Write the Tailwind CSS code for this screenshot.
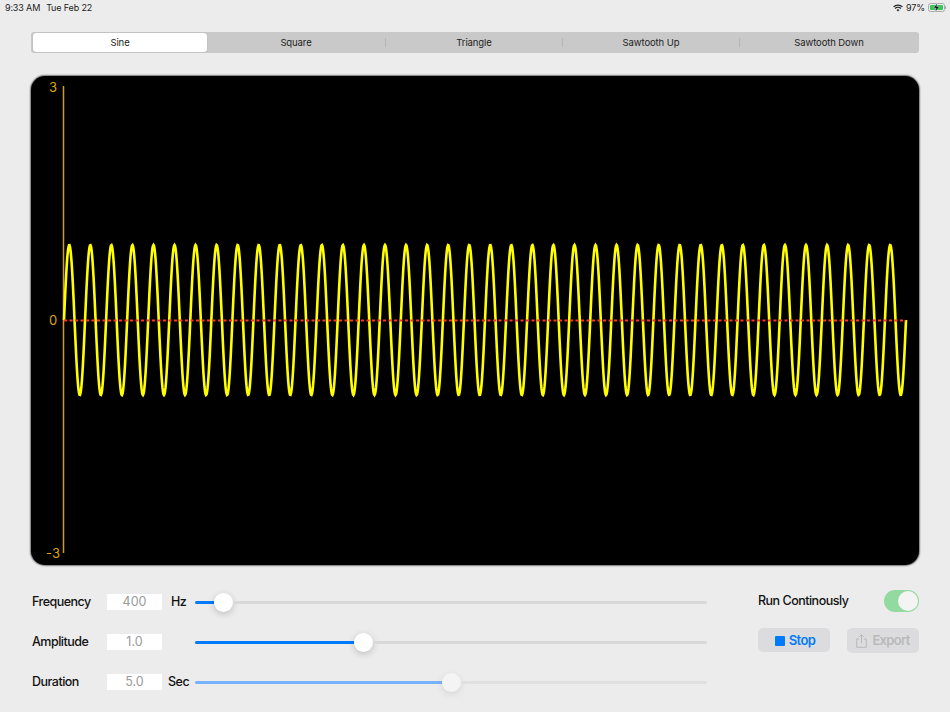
<!DOCTYPE html>
<html lang="en">
<head>
    <meta charset="UTF-8">
    <title>Waveform Generator</title>
    <script src="https://cdn.jsdelivr.net/npm/@tailwindcss/browser@4"></script>
</head>
<body class="w-[950px] h-[712px] overflow-hidden bg-[#ececec] text-[#111] font-['Inter','Liberation_Sans',sans-serif]">

    <!-- Status bar -->
    <div class="h-[14px] pt-[1px] flex items-center justify-between pl-[5px] pr-[4px] text-[9px] tracking-[-0.15px] text-[#222]">
        <div class="flex gap-[6px]">
            <span>9:33 AM</span>
            <span>Tue Feb 22</span>
        </div>
        <div class="flex items-center gap-[3px]">
            <svg width="10" height="8" viewBox="0 0 11 8" fill="none" stroke="#222">
                <path d="M0.6 2.8 A7 7 0 0 1 10.4 2.8" stroke-width="1.4"/>
                <path d="M2.3 4.5 A4.6 4.6 0 0 1 8.7 4.5" stroke-width="1.4"/>
                <path d="M5.5 7.8 L3.9 6.1 A2.3 2.3 0 0 1 7.1 6.1 Z" fill="#222" stroke="none"/>
            </svg>
            <span>97%</span>
            <div class="flex items-center">
                <div class="w-[17px] h-[9px] rounded-[2.5px] border border-[#aaa] p-[1px] flex">
                    <div class="flex-1 rounded-[1px] bg-[#34c759] flex items-center justify-center">
                        <svg width="7" height="9" viewBox="0 0 6 8" class="shrink-0"><path d="M3.6 0 L0.4 4.6 H2.6 L2 8 L5.6 3.2 H3.2 Z" fill="#111" stroke="#ececec" stroke-width="0.4"/></svg>
                    </div>
                </div>
                <div class="w-[1px] h-[3px] bg-[#aaa]"></div>
            </div>
        </div>
    </div>

    <!-- Waveform picker -->
    <div class="mt-[18px] ml-[31px] w-[888px] h-[21px] bg-[#c9c9c9] rounded-[3px] p-[1px] flex text-[9.5px] tracking-[-0.1px] text-[#222]">
        <div class="w-[174px] pt-[1px] ml-[1px] bg-white rounded-[3px] shadow-[0_0_1px_rgba(0,0,0,0.3)] flex items-center justify-center">Sine</div>
        <div class="w-[179px] flex items-center justify-center border-r border-[#b5b5b5] my-[5px] pt-[1px]">Square</div>
        <div class="w-[177px] flex items-center justify-center border-r border-[#b5b5b5] my-[5px] pt-[1px]">Triangle</div>
        <div class="w-[177px] flex items-center justify-center border-r border-[#b5b5b5] my-[5px] pt-[1px]">Sawtooth Up</div>
        <div class="flex-1 flex items-center justify-center pt-[1px]">Sawtooth Down</div>
    </div>

    <!-- Chart -->
    <div class="relative mt-[23px] ml-[31px] w-[888px] h-[489px] bg-black rounded-[14px] shadow-[0_0_1.5px_1px_rgba(0,0,0,0.5)] overflow-hidden">
        <svg class="absolute left-[-1px] top-[-1px]" width="890" height="491" viewBox="30 75 890 491">
            <line x1="63.5" y1="86" x2="63.5" y2="553" stroke="#d4a000" stroke-width="1.5"/>
            <path id="wave" d="" fill="none" stroke="#ffff00" stroke-width="2.6"/>
            <line x1="64" y1="320.5" x2="906" y2="320.5" stroke="#ff3322" stroke-width="2" stroke-dasharray="3 2.5"/>
            <g fill="#dca800" font-size="13" text-anchor="middle">
                <text x="53" y="92">3</text>
                <text x="53" y="325">0</text>
                <text x="53" y="558">-3</text>
            </g>
        </svg>
    </div>

    <!-- Controls -->
    <div class="mt-[27px] ml-[32px] w-[887px] flex">
        <div class="w-[675px] flex flex-col gap-[20px] font-medium text-[12.5px] tracking-[-0.5px]">
            <div class="h-[20px] flex items-center">
                <span class="w-[75px] pt-[1px]">Frequency</span>
                <div class="w-[55px] h-[16px] pt-[1px] bg-white flex items-center justify-center font-normal tracking-normal text-[#9a9a9a]">400</div>
                <span class="w-[33px] pl-[9px] pt-[1px]">Hz</span>
                <div class="flex-1 flex items-center">
                    <div class="w-[18.5px] h-[3px] rounded-l-full bg-[#007aff]"></div>
                    <div class="w-[19px] h-[19px] rounded-full bg-white shadow-[0_2px_7px_rgba(0,0,0,0.2)]"></div>
                    <div class="flex-1 h-[3px] rounded-r-full bg-[#d9d9d9]"></div>
                </div>
            </div>
            <div class="h-[20px] flex items-center">
                <span class="w-[75px] pt-[1px]">Amplitude</span>
                <div class="w-[55px] h-[16px] pt-[1px] bg-white flex items-center justify-center font-normal tracking-normal text-[#9a9a9a]">1.0</div>
                <span class="w-[33px]"></span>
                <div class="flex-1 flex items-center">
                    <div class="w-[158.5px] h-[3px] rounded-l-full bg-[#007aff]"></div>
                    <div class="w-[19px] h-[19px] rounded-full bg-white shadow-[0_2px_7px_rgba(0,0,0,0.2)]"></div>
                    <div class="flex-1 h-[3px] rounded-r-full bg-[#d9d9d9]"></div>
                </div>
            </div>
            <div class="h-[20px] flex items-center">
                <span class="w-[75px] pt-[1px]">Duration</span>
                <div class="w-[55px] h-[16px] pt-[1px] bg-white flex items-center justify-center font-normal tracking-normal text-[#9a9a9a]">5.0</div>
                <span class="w-[33px] pl-[6px] pt-[1px]">Sec</span>
                <div class="flex-1 flex items-center">
                    <div class="w-[247px] h-[3px] rounded-l-full bg-[#76b3fb]"></div>
                    <div class="w-[19px] h-[19px] rounded-full bg-[#f4f4f4] shadow-[0_2px_7px_rgba(0,0,0,0.1)]"></div>
                    <div class="flex-1 h-[3px] rounded-r-full bg-[#e0e0e0]"></div>
                </div>
            </div>
        </div>

        <div class="ml-[51px] flex-1 font-medium text-[12.5px] tracking-[-0.5px]">
            <div class="h-[22px] -mt-[2px] flex items-center justify-between">
                <span>Run Continously</span>
                <div class="w-[35px] h-[22px] rounded-full bg-[#92da9f] p-[1px] flex justify-end">
                    <div class="w-[20px] h-[20px] rounded-full bg-[#f4f4f4]"></div>
                </div>
            </div>
            <div class="mt-[16px] flex justify-between text-[13px] font-semibold">
                <div class="w-[72px] h-[24px] pl-[2px] pt-[1px] rounded-[5px] bg-[#dcdcde] flex items-center justify-center gap-[4px] tracking-[-0.6px] text-[#007aff]">
                    <div class="w-[10px] h-[10px] rounded-[1px] bg-[#007aff]"></div>
                    <span>Stop</span>
                </div>
                <div class="w-[72px] h-[25px] pt-[1px] rounded-[5px] bg-[#dcdcde] flex items-center justify-center gap-[5px] tracking-[-0.7px] text-[#b9b9bb]">
                    <svg width="11" height="14" viewBox="0 0 11 14" fill="none" stroke="#b9b9bb" stroke-width="1">
                        <path d="M3.2 5 H0.7 V13.3 H10.3 V5 H7.8"/>
                        <path d="M5.5 9 V0.8 M3.2 2.9 L5.5 0.6 L7.8 2.9"/>
                    </svg>
                    <span>Export</span>
                </div>
            </div>
        </div>
    </div>

    <script>
        // 40 cycles of the sine across the plot
        const points = [];
        for (let x = 0; x <= 842; x += 0.5) {
            const y = 320 - 75 * Math.sin(2 * Math.PI * 40 * x / 842);
            points.push((64 + x).toFixed(1) + " " + y.toFixed(2));
        }
        document.getElementById("wave").setAttribute("d", "M" + points.join(" L"));
    </script>
</body>
</html>
